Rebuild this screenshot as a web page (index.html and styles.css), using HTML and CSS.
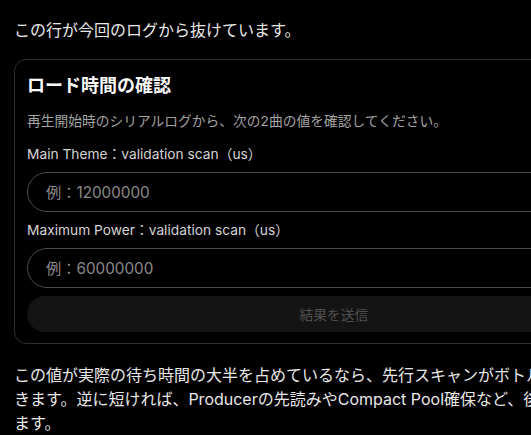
FILE: index.html
```html
<!DOCTYPE html>
<html lang="ja">
<head>
<meta charset="utf-8">
<title>ロード時間の確認</title>
<link rel="stylesheet" href="styles.css">
</head>
<body>
<main class="page">
  <p class="text">この行が今回のログから抜けています。</p>
  <form class="card">
    <h2 class="card-title">ロード時間の確認</h2>
    <p class="card-desc">再生開始時のシリアルログから、次の2曲の値を確認してください。</p>
    <label class="field-label" for="f1">Main Theme：validation scan（us）</label>
    <input class="field-input" id="f1" type="text" placeholder="例：12000000">
    <label class="field-label" for="f2">Maximum Power：validation scan（us）</label>
    <input class="field-input" id="f2" type="text" placeholder="例：60000000">
    <button class="submit" type="button" disabled>結果を送信</button>
  </form>
  <p class="text after">この値が実際の待ち時間の大半を占めているなら、先行スキャンがボトルネックと判断できます。逆に短ければ、Producerの先読みやCompact Pool確保など、後段の処理を疑います。</p>
</main>
</body>
</html>
```

FILE: styles.css
```css
html, body {
  margin: 0;
  padding: 0;
  background: #000;
  overflow: hidden;
}

body {
  font-family: Inter, "Noto Sans CJK JP", sans-serif;
  color: #e6e6e6;
}

.page {
  width: 640px;
  padding: 18px 0 0 14px;
}

.text {
  margin: 0;
  font-size: 16px;
  line-height: 24px;
  color: #e8e8e8;
}

.text.after {
  margin-top: 19px;
}

.card {
  margin-top: 17px;
  border: 1px solid #2e2e2e;
  border-radius: 12px;
  padding: 12px 12px 11px;
  display: flex;
  flex-direction: column;
  background: #000;
}

.card-title {
  margin: 0;
  font-size: 18px;
  line-height: 27px;
  font-weight: 700;
  color: #fafafa;
}

.card-desc {
  margin: 12px 0 0;
  font-size: 13.75px;
  line-height: 20px;
  color: #a3a3a3;
}

.field-label {
  display: block;
  margin-top: 14px;
  font-size: 13.75px;
  line-height: 18px;
  color: #d4d4d4;
}

.field-input + .field-label {
  margin-top: 9px;
}

.field-input {
  box-sizing: border-box;
  margin-top: 9px;
  height: 40px;
  width: 100%;
  border: 1px solid #4a4a4a;
  border-radius: 20px;
  background: #000;
  padding: 0 18px;
  font-family: Inter, "Noto Sans CJK JP", sans-serif;
  font-size: 15.25px;
  color: #e6e6e6;
  outline: none;
}

.field-input::placeholder {
  color: #8a8a8a;
}

.submit {
  margin-top: 8px;
  height: 36px;
  width: 100%;
  border: none;
  border-radius: 18px;
  background: #141414;
  color: #4e4e4e;
  font-family: Inter, "Noto Sans CJK JP", sans-serif;
  font-size: 13.75px;
}
```
